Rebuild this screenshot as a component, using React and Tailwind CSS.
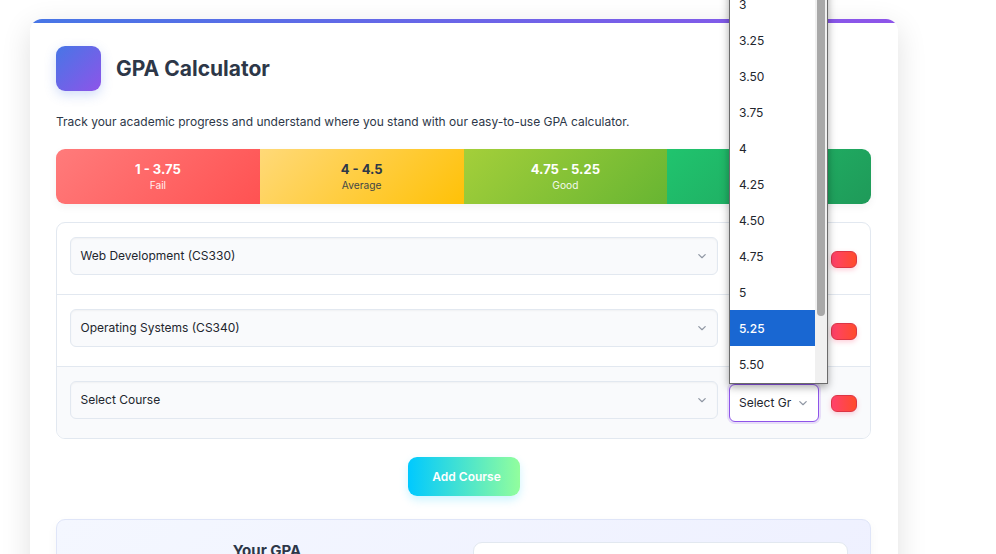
const GRADES = ["3", "3.25", "3.50", "3.75", "4", "4.25", "4.50", "4.75", "5", "5.25", "5.50"];

const BANDS = [
  { range: "1 - 3.75", label: "Fail", style: "from-[#ff7b7b] to-[#ff5252] text-white" },
  { range: "4 - 4.5", label: "Average", style: "from-[#ffd978] to-[#ffc107] text-[#2d3748]" },
  { range: "4.75 - 5.25", label: "Good", style: "from-[#a4cf3a] to-[#67b532] text-white" },
  { style: "from-[#20c46e] to-[#1f9a59] text-white" },
];

function Chevron() {
  return (
    <svg width="8" height="5" viewBox="0 0 8 5" fill="none" stroke="#8f96a3" strokeWidth="1.2" strokeLinecap="round" strokeLinejoin="round" className="shrink-0">
      <path d="M0.8 0.6 L4 3.7 L7.2 0.6" />
    </svg>
  );
}

function CourseSelect({ label }) {
  return (
    <div className="flex h-[38px] w-[648px] items-center justify-between rounded-[6px] border border-[#e2e8f0] bg-[#f9fafc] pr-[11px] pl-[9.5px] text-[12px] text-[#22262e] shadow-[inset_0_1px_2px_rgba(0,0,0,0.04)]">
      <span>{label}</span>
      <Chevron />
    </div>
  );
}

function GradeMenu() {
  return (
    <div className="absolute bottom-[37px] -left-px z-10 flex h-[400px] w-[99px] items-end overflow-hidden border border-[#6b6b6b] bg-white shadow-[0_3px_8px_rgba(0,0,0,0.35)]">
      <div className="w-[85px]">
        {GRADES.map((grade) => (
          <div
            key={grade}
            className={
              grade === "5.25"
                ? "flex h-9 items-center bg-[#1967d2] pt-px pl-[9px] text-[12px] font-medium text-white"
                : "flex h-9 items-center pt-px pl-[9px] text-[12px] text-[#22262e]"
            }
          >
            {grade}
          </div>
        ))}
        <div className="h-px" />
      </div>
      <div className="h-full w-3 bg-[#f0f0f0] px-[2px]">
        <div className="h-[331px] w-2 rounded-b-[4px] bg-[#a8a8a8]" />
      </div>
    </div>
  );
}

function GradeSelect() {
  return (
    <div className="relative mt-[3px] ml-[11px] flex h-[38px] w-[90px] items-center justify-between rounded-[6px] border border-[#8e54e9] bg-white pr-[11px] pl-[9px] text-[12px] text-[#22262e] shadow-[0_0_0_2px_rgba(142,84,233,0.17)]">
      <span className="w-[53px] overflow-hidden whitespace-nowrap">Select Gr</span>
      <Chevron />
      <GradeMenu />
    </div>
  );
}

function CourseRow({ label, open }) {
  return (
    <div className={open ? "flex h-[71px] rounded-b-[8px] bg-[#f9fafc] pt-[14px] pl-[13px]" : "flex h-[72px] border-b border-[#e2e8f0] pt-[14px] pl-[13px]"}>
      <CourseSelect label={label} />
      {open ? <GradeSelect /> : <div className="ml-[11px] w-[90px]" />}
      <div className="mt-[14px] ml-3 h-[17px] w-[26px] rounded-[6px] border border-[#dc3545] bg-linear-to-r/srgb from-[#ff416c] to-[#ff4b2b] shadow-[0_2px_5px_rgba(255,65,108,0.25)]" />
    </div>
  );
}

export default function App() {
  return (
    <div className="h-[554px] w-[996px] overflow-hidden bg-white pt-[19px] pl-[30px] font-['Inter',sans-serif] text-[#2d3748]">
      <div className="h-[620px] w-[868px] rounded-[12px] bg-white shadow-[0_8px_30px_rgba(0,0,0,0.12)]">
        <div className="h-3 overflow-hidden rounded-t-[12px]">
          <div className="h-1 bg-linear-to-r/srgb from-[#4776e6] to-[#8e54e9]" />
        </div>
        <div className="px-[26px] pt-[15px]">
          <div className="flex items-center gap-[15px]">
            <div className="size-[45px] rounded-[9px] bg-linear-135/srgb from-[#4776e6] to-[#8e54e9] shadow-[0_4px_12px_rgba(71,118,230,0.25)]" />
            <h1 className="text-[21px] leading-[26px] font-bold">GPA Calculator</h1>
          </div>

          <p className="mt-[21px] text-[12px] leading-5">
            Track your academic progress and understand where you stand with our easy-to-use GPA calculator.
          </p>

          <div className="mt-[17px] grid h-[55px] w-[815px] grid-cols-4 overflow-hidden rounded-[9px] shadow-[0_3px_8px_rgba(0,0,0,0.05)]">
            {BANDS.map((band) => (
              <div key={band.style} className={`flex flex-col items-center bg-linear-135/srgb pt-[12px] ${band.style}`}>
                <div className="text-[13px] leading-[17px] font-bold">{band.range}</div>
                <div className="text-[10.2px] leading-[15px] opacity-90">{band.label}</div>
              </div>
            ))}
          </div>

          <div className="mt-[18px] w-[815px] rounded-[9px] border border-[#e2e8f0]">
            <CourseRow label="Web Development (CS330)" />
            <CourseRow label="Operating Systems (CS340)" />
            <CourseRow label="Select Course" open />
          </div>

          <div className="mt-[18px] flex pl-[352px]">
            <button className="h-[39px] w-[112px] rounded-[9px] bg-linear-to-r/srgb from-[#00c9ff] to-[#92fe9d] pt-px pl-[5px] text-[12px] font-semibold text-white shadow-[0_4px_10px_rgba(0,201,255,0.2)]">
              Add Course
            </button>
          </div>

          <div className="mt-[23px] flex h-[120px] w-[815px] rounded-[9px] border border-[#dfe5f8] bg-linear-135/srgb from-[#f4f7ff] to-[#eef0ff] pt-[22px] pl-[22px] shadow-[0_4px_12px_rgba(0,0,0,0.04)]">
            <div className="w-[376px] text-center text-[15px] leading-[18px] font-bold">Your GPA</div>
            <div className="ml-[18px] h-[90px] w-[375px] rounded-[9px] border border-[#e2e8f0] bg-white" />
          </div>
        </div>
      </div>
    </div>
  );
}
